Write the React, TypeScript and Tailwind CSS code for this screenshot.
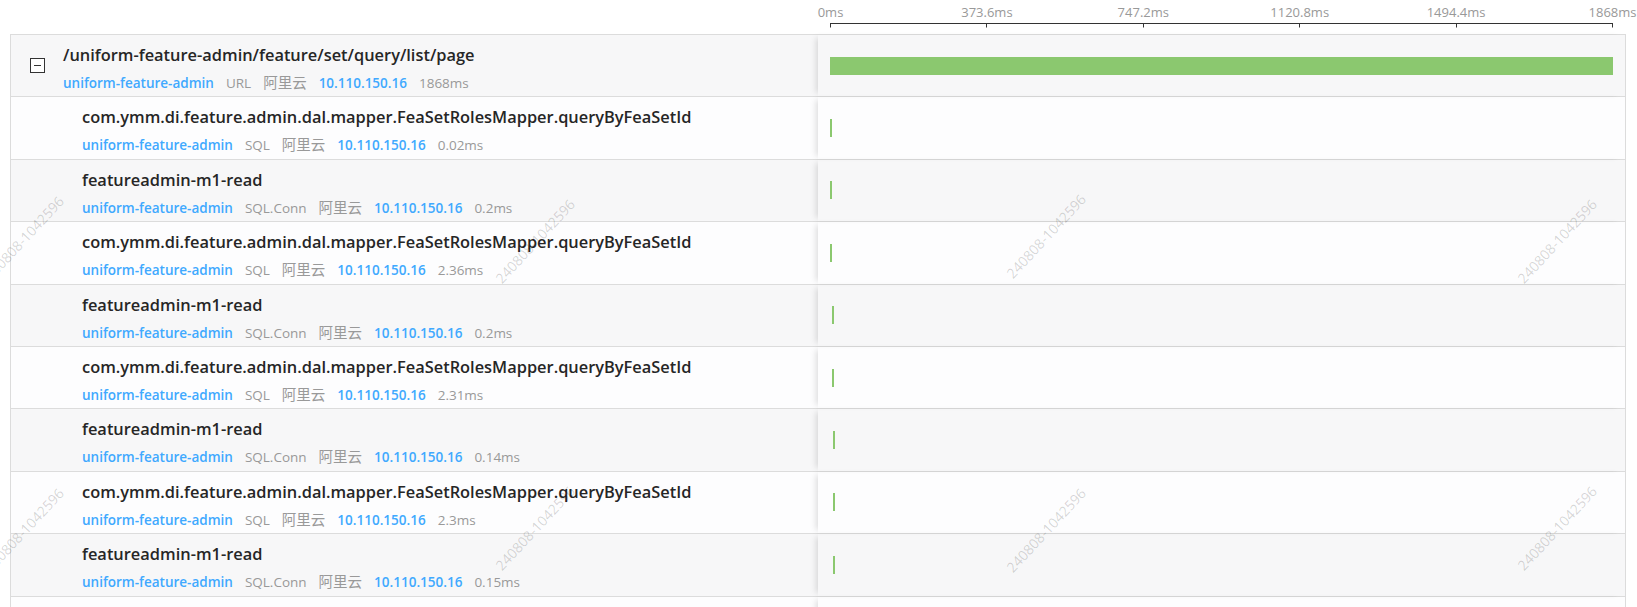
import React from 'react';

type Span = {
  title: string;
  type: string;
  cost: string;
  ms: number;
  offset: number;
  root?: boolean;
};

const SERVICE = 'uniform-feature-admin';
const IP = '10.110.150.16';
const TOTAL = 1868;
const AXIS_W = 782;

const spans: Span[] = [
  { title: '/uniform-feature-admin/feature/set/query/list/page', type: 'URL', cost: '1868ms', ms: 1868, offset: 0, root: true },
  { title: 'com.ymm.di.feature.admin.dal.mapper.FeaSetRolesMapper.queryByFeaSetId', type: 'SQL', cost: '0.02ms', ms: 0.02, offset: 0 },
  { title: 'featureadmin-m1-read', type: 'SQL.Conn', cost: '0.2ms', ms: 0.2, offset: 0 },
  { title: 'com.ymm.di.feature.admin.dal.mapper.FeaSetRolesMapper.queryByFeaSetId', type: 'SQL', cost: '2.36ms', ms: 2.36, offset: 0 },
  { title: 'featureadmin-m1-read', type: 'SQL.Conn', cost: '0.2ms', ms: 0.2, offset: 1.5 },
  { title: 'com.ymm.di.feature.admin.dal.mapper.FeaSetRolesMapper.queryByFeaSetId', type: 'SQL', cost: '2.31ms', ms: 2.31, offset: 1.5 },
  { title: 'featureadmin-m1-read', type: 'SQL.Conn', cost: '0.14ms', ms: 0.14, offset: 2.5 },
  { title: 'com.ymm.di.feature.admin.dal.mapper.FeaSetRolesMapper.queryByFeaSetId', type: 'SQL', cost: '2.3ms', ms: 2.3, offset: 2.5 },
  { title: 'featureadmin-m1-read', type: 'SQL.Conn', cost: '0.15ms', ms: 0.15, offset: 3.3 },
  { title: 'com.ymm.di.feature.admin.dal.mapper.FeaSetRolesMapper.queryByFeaSetId', type: 'SQL', cost: '2.28ms', ms: 2.28, offset: 3.5 },
];

const ticks = ['0ms', '373.6ms', '747.2ms', '1120.8ms', '1494.4ms', '1868ms'];

const Axis = () => (
  <div className="relative h-[34px] w-[783px] text-[13px] leading-[20px] text-[#999]">
    {ticks.map((t, i) => (
      <span
        key={t}
        className="absolute top-[2px] -translate-x-1/2 whitespace-nowrap"
        style={{ left: (i * AXIS_W) / 5 + 0.5 }}
      >
        {t}
      </span>
    ))}
    <svg className="absolute left-0 top-[23px]" width="783" height="5" viewBox="0 0 783 5">
      <line x1="0" y1="0.5" x2="783" y2="0.5" stroke="#333" strokeWidth="1" />
      {ticks.map((t, i) => {
        const x = Math.round((i * AXIS_W) / 5) + 0.5;
        return <line key={t} x1={x} y1="0" x2={x} y2="4.5" stroke="#333" strokeWidth="1" />;
      })}
    </svg>
  </div>
);

const MinusBox = () => (
  <span className="flex h-[15px] w-[15px] shrink-0 items-center justify-center border border-[#333] bg-white">
    <span className="h-px w-[7px] bg-[#333]" />
  </span>
);

const Row = ({ span, idx }: { span: Span; idx: number }) => {
  const w = span.root ? AXIS_W + 1 : Math.max(2, (span.ms / TOTAL) * AXIS_W);
  return (
    <div
      className={
        'flex h-[62.4px] border-b border-[#dcdcdc] ' +
        (idx % 2 === 0 ? 'bg-[#f7f7f8]' : 'bg-[#fdfdfe]')
      }
    >
      <div className={'flex w-[807px] items-center ' + (span.root ? 'pl-[19px]' : 'pl-[71px]')}>
        {span.root && <MinusBox />}
        <div className={'self-stretch pt-[8px] ' + (span.root ? 'ml-[18px]' : '')}>
          <div className="whitespace-nowrap text-[16.4px] leading-[24px] font-semibold text-[#262626]">
            {span.title}
          </div>
          <div className="mt-[6px] flex items-center gap-[12px] whitespace-nowrap text-[13.5px] leading-[20px] text-[#999]">
            <span className="font-semibold text-[#40a9ff]">{SERVICE}</span>
            <span>{span.type}</span>
            <span className="text-[14.5px]">阿里云</span>
            <span className="font-semibold text-[#40a9ff]">{IP}</span>
            <span>{span.cost}</span>
          </div>
        </div>
      </div>
      <div className="relative flex flex-1 items-center pl-[12px] pr-[12px] shadow-[-5px_0_6px_-3px_rgba(0,0,0,0.13)]">
        <div
          className="h-[18px] bg-[#8bc86f]"
          style={{ marginLeft: span.offset, width: w }}
        />
      </div>
    </div>
  );
};

const marks = [
  'left-[24px] top-[238px]',
  'left-[535px] top-[241px]',
  'left-[1046px] top-[236px]',
  'left-[1557px] top-[241px]',
  'left-[24px] top-[530px]',
  'left-[535px] top-[528px]',
  'left-[1046px] top-[530px]',
  'left-[1557px] top-[528px]',
];

export default function App() {
  return (
    <div className="relative h-[607px] w-full overflow-hidden bg-white font-['Open_Sans','Noto_Sans_CJK_SC',sans-serif]">
      <div className="ml-[10px] w-[1616px]">
        <div className="flex h-[34px]">
          <div className="w-[820px] shrink-0" />
          <Axis />
        </div>
        <div className="border-x border-t border-[#dcdcdc]">
          {spans.map((s, i) => (
            <Row key={i} span={s} idx={i} />
          ))}
        </div>
      </div>

      <div className="pointer-events-none absolute inset-0">
        {marks.map((m) => (
          <span
            key={m}
            className={
              'absolute -translate-x-1/2 -translate-y-1/2 -rotate-[47deg] whitespace-nowrap text-[14px] text-[rgba(0,0,0,0.17)] ' +
              m
            }
          >
            240808-1042596
          </span>
        ))}
      </div>
    </div>
  );
}
